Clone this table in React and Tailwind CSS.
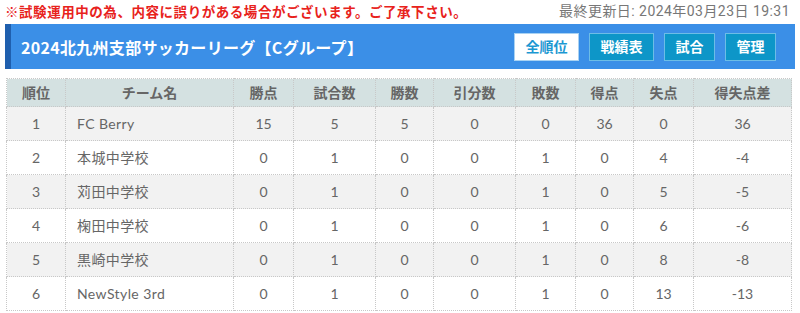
import React from "react";

const rows = [
  ["1", "FC Berry", "15", "5", "5", "0", "0", "36", "0", "36"],
  ["2", "本城中学校", "0", "1", "0", "0", "1", "0", "4", "-4"],
  ["3", "苅田中学校", "0", "1", "0", "0", "1", "0", "5", "-5"],
  ["4", "椈田中学校", "0", "1", "0", "0", "1", "0", "6", "-6"],
  ["5", "黒崎中学校", "0", "1", "0", "0", "1", "0", "8", "-8"],
  ["6", "NewStyle 3rd", "0", "1", "0", "0", "1", "0", "13", "-13"],
];

const heads = ["順位", "チーム名", "勝点", "試合数", "勝数", "引分数", "敗数", "得点", "失点", "得失点差"];
const widths = ["w-[59px]", "w-[168px]", "w-[60px]", "w-[82px]", "w-[58px]", "w-[82px]", "w-[60px]", "w-[58px]", "w-[60px]", "w-[98px]"];

const jp = "font-['Lato','Noto_Sans_CJK_JP',sans-serif]";

export default function App() {
  return (
    <div className={`w-[800px] h-[313px] bg-white overflow-hidden ${jp}`}>
      <div className="flex justify-between items-center h-[22px] px-[5px] pt-[1px]">
        <span className="text-[13.5px] font-bold text-[#e8221c] font-['Noto_Sans_CJK_JP',sans-serif] tracking-[0.55px]">
          ※試験運用中の為、内容に誤りがある場合がございます。ご了承下さい。
        </span>
        <span className="text-[14px] text-[#777] font-['Roboto','Noto_Sans_CJK_JP',sans-serif] tracking-[0.45px] pr-[5px]">
          最終更新日: 2024年03月23日 19:31
        </span>
      </div>
      <div className="mt-[2px] mx-[5px] h-[45px] flex items-center bg-[#3b8fe7] border-l-[6px] border-[#1f5fae]">
        <h1 className="ml-[10px] text-[16px] font-bold text-white font-['Noto_Sans_CJK_JP',sans-serif] tracking-[0.3px]">
          2024北九州支部サッカーリーグ【Cグループ】
        </h1>
        <div className="ml-auto mr-[19px] flex gap-[10px] font-['Noto_Sans_CJK_JP',sans-serif] text-[14px] font-bold">
          <button className="w-[65px] h-[28px] bg-white text-[#1c98d2] border border-[#a9d2f2]">全順位</button>
          <button className="w-[65px] h-[28px] bg-[#0d96c8] text-white border border-[#6cbde6]">戦績表</button>
          <button className="w-[51px] h-[28px] bg-[#0d96c8] text-white border border-[#6cbde6]">試合</button>
          <button className="w-[51px] h-[28px] bg-[#0d96c8] text-white border border-[#6cbde6]">管理</button>
        </div>
      </div>
      <div className="mx-[6px] mt-[9px]">
        <table className="w-[785px] border-collapse table-fixed text-[14px]">
          <thead>
            <tr className="bg-[#d4e1e1] h-[28px]">
              {heads.map((h, i) => (
                <th key={i} className={`${widths[i]} border border-dotted border-[#c8c8c8] font-bold text-[#666] text-center font-['Noto_Sans_CJK_JP',sans-serif] text-[14px]`}>
                  {h}
                </th>
              ))}
            </tr>
          </thead>
          <tbody>
            {rows.map((r, ri) => (
              <tr key={ri} className={`h-[34px] ${ri % 2 === 0 ? "bg-[#f2f2f2]" : "bg-white"}`}>
                {r.map((c, ci) => (
                  <td
                    key={ci}
                    className={`border border-dotted border-[#c8c8c8] text-[#666] ${ci === 1 ? "text-left pl-[11px] tracking-[0.4px]" : "text-center"}`}
                  >
                    {c}
                  </td>
                ))}
              </tr>
            ))}
          </tbody>
        </table>
      </div>
    </div>
  );
}
